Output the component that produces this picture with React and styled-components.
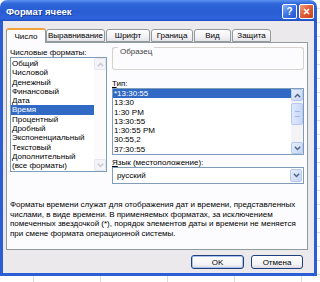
import React from "react"
import styled, { createGlobalStyle } from "styled-components"

const GlobalStyle = createGlobalStyle`
  html, body {
    margin: 0;
    padding: 0;
  }
  body {
    width: 320px;
    height: 282px;
    overflow: hidden;
    background-color: #fff;
    background-image:
      linear-gradient(#dadadf 1px, transparent 1px),
      linear-gradient(90deg, #dadadf 1px, transparent 1px);
    background-size: 67px 14px;
    background-position: 33px 8px;
    font-family: "Liberation Sans", Arial, sans-serif;
    font-size: 8px;
    color: #000;
  }
`

const frameBlue = "#2b5dd4"

const Window = styled.div`
  width: 317px;
  height: 276px;
  display: flex;
  flex-direction: column;
  border-radius: 7px 7px 0 0;
  overflow: hidden;
`

const TitleBar = styled.div`
  height: 21px;
  flex: none;
  display: flex;
  align-items: center;
  padding: 0 3px 0 6px;
  background: linear-gradient(#5b92f0 0%, #2f66da 18%, #285cd3 55%, #2d63dc 88%, #1d4cc0 100%);
`

const Title = styled.div`
  flex: 1;
  color: #fff;
  font-weight: bold;
  font-size: 9.5px;
  text-shadow: 1px 1px 0 #1a3c9a;
  padding-top: 2px;
`

const CaptionButton = styled.div`
  width: 13px;
  height: 13px;
  margin-left: 2px;
  margin-top: 1px;
  border: 1px solid #fff;
  border-radius: 2px;
  display: flex;
  align-items: center;
  justify-content: center;
  color: #fff;
  font-weight: bold;
  font-size: 10px;
  background: ${(p) =>
    p.$close
      ? "linear-gradient(135deg, #f0a080 0%, #e0603c 45%, #c8401e 100%)"
      : "linear-gradient(135deg, #8eb4f8 0%, #3a72e6 50%, #2456d0 100%)"};
`

const Body = styled.div`
  flex: 1;
  display: flex;
  flex-direction: column;
  background: #ece9ec;
  border: 3px solid ${frameBlue};
  border-top: 0;
  padding: 6px 6px 4px 3px;
`

const TabRow = styled.div`
  height: 15px;
  display: flex;
  align-items: flex-end;
  position: relative;
  z-index: 1;
`

const Tab = styled.div`
  width: ${(p) => p.$w}px;
  height: ${(p) => (p.$active ? 15 : 13)}px;
  margin-bottom: ${(p) => (p.$active ? -1 : 0)}px;
  margin-right: ${(p) => (p.$active ? 0 : 1)}px;
  display: flex;
  align-items: center;
  justify-content: center;
  box-sizing: border-box;
  border: 1px solid #919b9c;
  border-bottom: ${(p) => (p.$active ? "0" : "1px solid #919b9c")};
  border-top: ${(p) => (p.$active ? "2px solid #f0a33c" : "1px solid #919b9c")};
  border-radius: 3px 3px 0 0;
  background: ${(p) =>
    p.$active ? "#fcfcfe" : "linear-gradient(#ffffff, #f2f1f4 60%, #e6e4ea)"};
  white-space: nowrap;
`

const Panel = styled.div`
  height: 208px;
  box-sizing: border-box;
  background: #fcfcfe;
  border: 1px solid #919b9c;
  padding: 4px 3px 0 3px;
  display: flex;
  flex-direction: column;
`

const Top = styled.div`
  display: flex;
  gap: 5px;
`

const LeftCol = styled.div`
  width: 97px;
  display: flex;
  flex-direction: column;
`

const RightCol = styled.div`
  width: 192px;
  display: flex;
  flex-direction: column;
`

const Label = styled.div`
  height: 9px;
  line-height: 9px;
  padding-top: ${(p) => p.$top || 0}px;
  white-space: nowrap;
`

const GroupBox = styled.div`
  height: 23px;
  box-sizing: border-box;
  border: 1px solid #d5d3cc;
  border-top: 0;
  border-radius: 3px;
`

const GroupHead = styled.div`
  display: flex;
  margin: 0 -1px;
`

const HeadLine = styled.div`
  flex: ${(p) => (p.$grow ? 1 : "none")};
  width: ${(p) => (p.$grow ? "auto" : "5px")};
  height: 3px;
  border-top: 1px solid #d5d3cc;
  border-left: ${(p) => (p.$grow ? "0" : "1px solid #d5d3cc")};
  border-right: ${(p) => (p.$grow ? "1px solid #d5d3cc" : "0")};
  border-radius: ${(p) => (p.$grow ? "0 3px 0 0" : "3px 0 0 0")};
`

const GroupLabel = styled.div`
  line-height: 9px;
  padding: 0 2px;
  color: #3c3c3c;
`

const ListBox = styled.div`
  height: ${(p) => p.$h}px;
  box-sizing: border-box;
  border: 1px solid #7f9db9;
  background: #fff;
  display: flex;
`

const Items = styled.div`
  flex: 1;
  padding-top: ${(p) => p.$pt || 0}px;
  overflow: hidden;
`

const Item = styled.div`
  height: 9.3px;
  line-height: 9.3px;
  padding-left: 1px;
  white-space: nowrap;
  background: ${(p) => (p.$selected ? "#316ac5" : "transparent")};
  color: ${(p) => (p.$selected ? "#fff" : "#000")};
`

const ScrollBar = styled.div`
  width: 12px;
  display: flex;
  flex-direction: column;
  background: ${(p) => (p.$disabled ? "#fbfbfc" : "#f3f3f6")};
`

const ScrollButton = styled.div`
  height: 12px;
  box-sizing: border-box;
  display: flex;
  align-items: center;
  justify-content: center;
  border: 1px solid ${(p) => (p.$disabled ? "#e6e7ee" : "#b7c8f0")};
  border-radius: 2px;
  background: ${(p) =>
    p.$disabled ? "#f4f4f8" : "linear-gradient(135deg, #e6eefc, #c6d6f8)"};
`

const Track = styled.div`
  flex: 1;
  padding: 2px 0;
`

const Thumb = styled.div`
  height: 22px;
  box-sizing: border-box;
  border: 1px solid #b7c8f0;
  border-radius: 2px;
  background: linear-gradient(90deg, #dfe8fb, #c9d8f8);
  display: flex;
  align-items: center;
  justify-content: center;
`

const Grip = styled.div`
  width: 5px;
  height: 4px;
  border-top: 1px solid #9fb5e8;
  border-bottom: 1px solid #9fb5e8;
`

const Combo = styled.div`
  height: 17px;
  box-sizing: border-box;
  border: 1px solid #7f9db9;
  background: #fff;
  display: flex;
  align-items: center;
  padding: 1px;
`

const ComboText = styled.div`
  flex: 1;
  padding-left: 3px;
`

const ComboButton = styled(ScrollButton)`
  width: 12px;
  height: 13px;
`

const Description = styled.div`
  margin-top: 16px;
  line-height: 9.5px;
  white-space: nowrap;
`

const Footer = styled.div`
  display: flex;
  justify-content: flex-end;
  gap: 7px;
  margin-top: 5px;
  padding-right: 5px;
`

const Button = styled.div`
  width: ${(p) => p.$w}px;
  height: 14px;
  box-sizing: border-box;
  display: flex;
  align-items: center;
  justify-content: center;
  border: 1px solid #1e3f7a;
  border-radius: 3px;
  background: linear-gradient(#ffffff, #f3f2f5 70%, #dcdae0);
  box-shadow: ${(p) => (p.$default ? "inset 0 0 0 1px #a8c2ee" : "none")};
`

const Underline = styled.span`
  text-decoration: underline;
`

const Chevron = ({ up, color = "#4d6185" }) => (
  <svg width="7" height="5" viewBox="0 0 7 5">
    <path
      d={up ? "M0.8 4.2 L3.5 1.4 L6.2 4.2" : "M0.8 0.8 L3.5 3.6 L6.2 0.8"}
      fill="none"
      stroke={color}
      strokeWidth="1.4"
    />
  </svg>
)

const formats = [
  "Общий",
  "Числовой",
  "Денежный",
  "Финансовый",
  "Дата",
  "Время",
  "Процентный",
  "Дробный",
  "Экспоненциальный",
  "Текстовый",
  "Дополнительный",
  "(все форматы)",
]

const types = [
  "*13:30:55",
  "13:30",
  "1:30 PM",
  "13:30:55",
  "1:30:55 PM",
  "30:55,2",
  "37:30:55",
]

const tabs = [
  { label: "Число", w: 40 },
  { label: "Выравнивание", w: 59 },
  { label: "Шрифт", w: 44 },
  { label: "Граница", w: 42 },
  { label: "Вид", w: 37 },
  { label: "Защита", w: 39 },
]

export default function App() {
  return (
    <>
      <GlobalStyle />
      <Window>
        <TitleBar>
          <Title>Формат ячеек</Title>
          <CaptionButton>?</CaptionButton>
          <CaptionButton $close>
            <svg width="7" height="7" viewBox="0 0 7 7">
              <path d="M1 1 L6 6 M6 1 L1 6" stroke="#fff" strokeWidth="1.6" />
            </svg>
          </CaptionButton>
        </TitleBar>
        <Body>
          <TabRow>
            {tabs.map((t, i) => (
              <Tab key={t.label} $w={t.w} $active={i === 0}>
                {t.label}
              </Tab>
            ))}
          </TabRow>
          <Panel>
            <Top>
              <LeftCol>
                <Label $top={1}>Числовые форматы:</Label>
                <ListBox $h={115}>
                  <Items $pt={1}>
                    {formats.map((f) => (
                      <Item key={f} $selected={f === "Время"}>
                        {f}
                      </Item>
                    ))}
                  </Items>
                  <ScrollBar $disabled>
                    <ScrollButton $disabled>
                      <Chevron up color="#c5c9d6" />
                    </ScrollButton>
                    <Track />
                    <ScrollButton $disabled>
                      <Chevron color="#c5c9d6" />
                    </ScrollButton>
                  </ScrollBar>
                </ListBox>
              </LeftCol>
              <RightCol>
                <GroupBox>
                  <GroupHead>
                    <HeadLine />
                    <GroupLabel>Образец</GroupLabel>
                    <HeadLine $grow />
                  </GroupHead>
                </GroupBox>
                <Label $top={9}>
                  <Underline>Т</Underline>ип:
                </Label>
                <ListBox $h={67}>
                  <Items>
                    {types.map((t, i) => (
                      <Item key={i} $selected={i === 0}>
                        {t}
                      </Item>
                    ))}
                  </Items>
                  <ScrollBar>
                    <ScrollButton>
                      <Chevron up />
                    </ScrollButton>
                    <Track>
                      <Thumb>
                        <Grip />
                      </Thumb>
                    </Track>
                    <ScrollButton>
                      <Chevron />
                    </ScrollButton>
                  </ScrollBar>
                </ListBox>
                <Label $top={3}>
                  <Underline>Я</Underline>зык (местоположение):
                </Label>
                <Combo>
                  <ComboText>русский</ComboText>
                  <ComboButton>
                    <Chevron />
                  </ComboButton>
                </Combo>
              </RightCol>
            </Top>
            <Description>
              Форматы времени служат для отображения дат и времени, представленных
              <br />
              числами, в виде времени. В применяемых форматах, за исключением
              <br />
              помеченных звездочкой (*), порядок элементов даты и времени не меняется
              <br />
              при смене формата операционной системы.
            </Description>
          </Panel>
          <Footer>
            <Button $w={53} $default>
              OK
            </Button>
            <Button $w={52}>Отмена</Button>
          </Footer>
        </Body>
      </Window>
    </>
  )
}
